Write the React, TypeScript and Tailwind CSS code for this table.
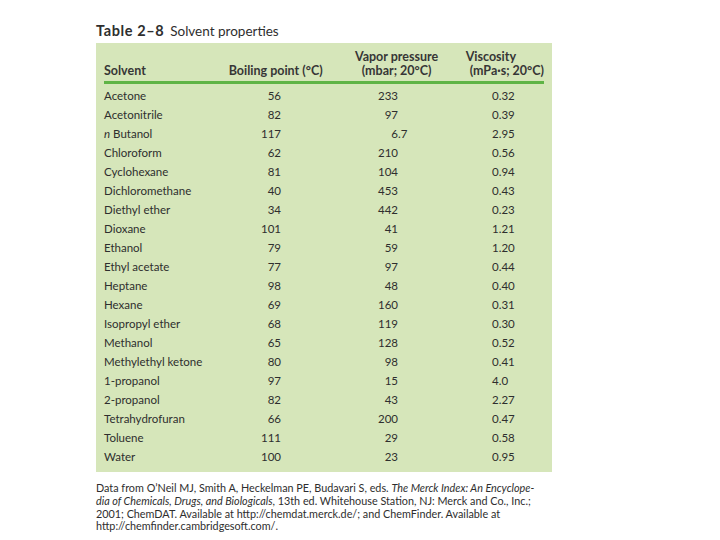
const rows: [string, string, string, string][] = [
  ["Acetone", "56", "233", "0.32"],
  ["Acetonitrile", "82", "97", "0.39"],
  ["n Butanol", "117", "6.7", "2.95"],
  ["Chloroform", "62", "210", "0.56"],
  ["Cyclohexane", "81", "104", "0.94"],
  ["Dichloromethane", "40", "453", "0.43"],
  ["Diethyl ether", "34", "442", "0.23"],
  ["Dioxane", "101", "41", "1.21"],
  ["Ethanol", "79", "59", "1.20"],
  ["Ethyl acetate", "77", "97", "0.44"],
  ["Heptane", "98", "48", "0.40"],
  ["Hexane", "69", "160", "0.31"],
  ["Isopropyl ether", "68", "119", "0.30"],
  ["Methanol", "65", "128", "0.52"],
  ["Methylethyl ketone", "80", "98", "0.41"],
  ["1-propanol", "97", "15", "4.0"],
  ["2-propanol", "82", "43", "2.27"],
  ["Tetrahydrofuran", "66", "200", "0.47"],
  ["Toluene", "111", "29", "0.58"],
  ["Water", "100", "23", "0.95"],
];

const SolventName = ({ name }: { name: string }) => {
  if (name.startsWith("n ")) {
    return (
      <>
        <span className="italic">n</span> {name.slice(2)}
      </>
    );
  }
  return <>{name}</>;
};

export default function App() {
  return (
    <div
      className="w-[720px] h-[540px] bg-white text-[#2e2e2e] pl-[96px] pt-[22px]"
      style={{ fontFamily: "Lato, 'Open Sans', sans-serif" }}
    >
      <h1 className="text-[13.5px] leading-[18px] h-[21px] whitespace-nowrap">
        <span className="font-bold text-[14.5px] tracking-[0.6px]">Table 2–8</span>
        <span className="ml-[6px]">Solvent properties</span>
      </h1>

      <div className="w-[456px] bg-[#d6e6ba] px-[8px] pt-[7px] pb-[6px]">
        <div className="flex text-[12.5px] leading-[14px] font-bold text-[#363636] whitespace-nowrap">
          <div className="w-[127px] pt-[14px]">Solvent</div>
          <div className="w-[121px] pt-[14px]">Boiling point (°C)</div>
          <div className="w-[100px] text-center">
            Vapor pressure
            <br />
            (mbar; 20°C)
          </div>
          <div className="flex-1 pl-[20px]">
            Viscosity
            <br />
            <span className="pl-[4px]">(mPa·s; 20°C)</span>
          </div>
        </div>
        <div className="h-[3px] bg-[#5fb446] mt-[3px] mb-[2px]" />

        {rows.map(([name, bp, vp, visc]) => {
          const [vpInt, vpFrac] = vp.split(".");
          return (
            <div key={name} className="flex items-center h-[19px] text-[11.5px]">
              <div className="w-[140px]">
                <SolventName name={name} />
              </div>
              <div className="w-[37px] text-right">{bp}</div>
              <div className="w-[117px] text-right">{vpInt}</div>
              <div className="w-[94px]">{vpFrac ? "." + vpFrac : ""}</div>
              <div className="flex-1">{visc}</div>
            </div>
          );
        })}
      </div>

      <div className="w-[460px] mt-[10px] text-[10.8px] leading-[12.8px]">
        <div className="whitespace-nowrap">
          Data from O’Neil MJ, Smith A, Heckelman PE, Budavari S, eds.{" "}
          <span className="italic">The Merck Index: An Encyclope-</span>
        </div>
        <div className="whitespace-nowrap">
          <span className="italic">dia of Chemicals, Drugs, and Biologicals</span>, 13th ed. Whitehouse Station, NJ: Merck and Co., Inc.;
        </div>
        <div className="whitespace-nowrap">
          2001; ChemDAT. Available at http://chemdat.merck.de/; and ChemFinder. Available at
        </div>
        <div className="whitespace-nowrap">http://chemfinder.cambridgesoft.com/.</div>
      </div>
    </div>
  );
}
